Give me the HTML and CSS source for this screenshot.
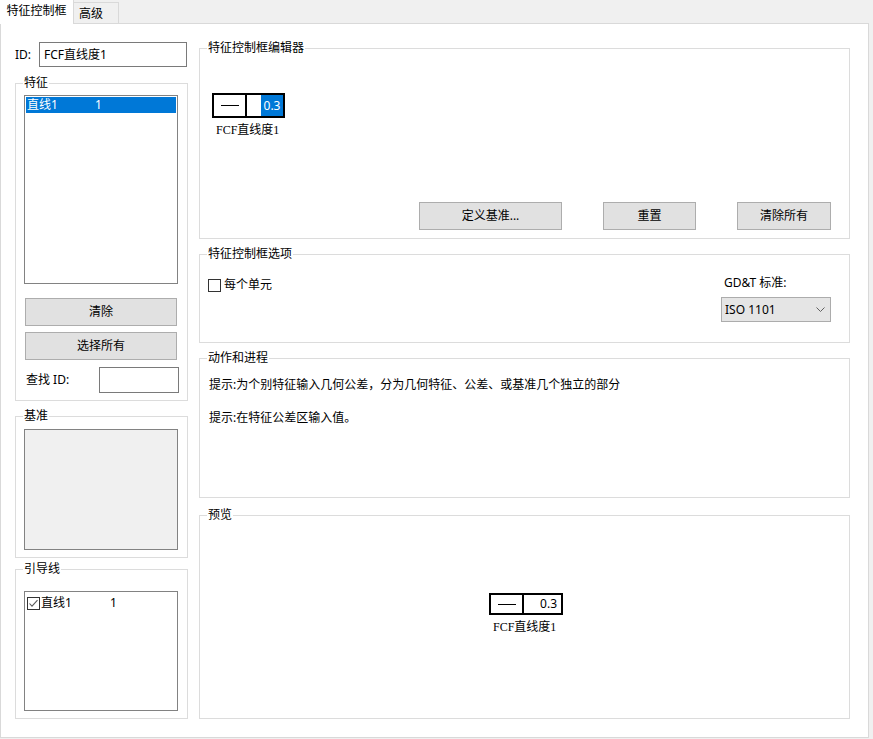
FILE: index.html
```html
<!DOCTYPE html>
<html lang="zh-CN">
<head>
<meta charset="utf-8">
<title>特征控制框</title>
<link rel="stylesheet" href="styles.css">
</head>
<body>
<div class="tabs">
  <div class="tab active">特征控制框</div>
  <div class="tab">高级</div>
</div>
<div class="panel">
  <div class="col-left">
    <div class="id-row">
      <span class="id-lbl">ID:</span>
      <div class="input id-input">FCF直线度1</div>
    </div>
    <div class="group g-feature">
      <div class="gtitle">特征</div>
      <div class="listbox feat-list">
        <div class="row selected"><span class="c1">直线1</span><span>1</span></div>
      </div>
      <div class="btn wide btn-clear">清除</div>
      <div class="btn wide btn-all">选择所有</div>
      <div class="find-row">
        <span>查找 ID:</span>
        <div class="input find-input"></div>
      </div>
    </div>
    <div class="group g-datum">
      <div class="gtitle">基准</div>
      <div class="datum-box"></div>
    </div>
    <div class="group g-leader">
      <div class="gtitle">引导线</div>
      <div class="listbox leader-list">
        <div class="row check-item">
          <svg class="cb" width="13" height="13" viewBox="0 0 13 13"><rect x="0.5" y="0.5" width="12" height="12" fill="#fff" stroke="#333"/><path d="M2.5 6.5 L5 9.2 L10.5 3.2" fill="none" stroke="#5a5a5a" stroke-width="1.1"/></svg>
          <span class="c1 lc1">直线1</span><span class="num">1</span>
        </div>
      </div>
    </div>
  </div>
  <div class="col-right">
    <div class="group g-editor">
      <div class="gtitle">特征控制框编辑器</div>
      <div class="fcf-wrap edit-wrap">
        <div class="fcf fcf-edit">
          <div class="sym"><div class="dash"></div></div>
          <div class="val"><span class="hl">0.3</span></div>
        </div>
        <div class="fcf-label">FCF直线度1</div>
      </div>
      <div class="edit-btns">
        <div class="btn b1">定义基准...</div>
        <div class="btn b2">重置</div>
        <div class="btn b3">清除所有</div>
      </div>
    </div>
    <div class="group g-options">
      <div class="gtitle">特征控制框选项</div>
      <div class="opt-body">
        <div class="check-row">
          <svg class="cb" width="13" height="13" viewBox="0 0 13 13"><rect x="0.5" y="0.5" width="12" height="12" fill="#fff" stroke="#333"/></svg>
          <span>每个单元</span>
        </div>
        <div class="std">
          <div class="std-lbl">GD&amp;T 标准:</div>
          <div class="select"><span>ISO 1101</span>
            <svg width="9" height="6" viewBox="0 0 9 6"><path d="M0.5 0.5 L4.5 4.5 L8.5 0.5" fill="none" stroke="#606060"/></svg>
          </div>
        </div>
      </div>
    </div>
    <div class="group g-actions">
      <div class="gtitle">动作和进程</div>
      <div class="hint h1">提示:为个别特征输入几何公差，分为几何特征、公差、或基准几个独立的部分</div>
      <div class="hint h2">提示:在特征公差区输入值。</div>
    </div>
    <div class="group g-preview">
      <div class="gtitle">预览</div>
      <div class="fcf-wrap prev-wrap">
        <div class="fcf fcf-prev">
          <div class="sym"><div class="dash"></div></div>
          <div class="val"><span>0.3</span></div>
        </div>
        <div class="fcf-label">FCF直线度1</div>
      </div>
    </div>
  </div>
</div>
</body>
</html>
```
FILE: styles.css
```css
* { box-sizing: border-box; }

body {
  margin: 0;
  width: 873px;
  height: 739px;
  overflow: hidden;
  background: #f0f0f0;
  color: #000;
  font-family: "Noto Sans", "Noto Sans CJK SC", sans-serif;
  font-size: 12px;
  line-height: 16px;
}

/* tabs */
.tabs {
  display: flex;
  height: 23px;
  position: relative;
  z-index: 1;
}
.tab {
  width: 45px;
  height: 21px;
  margin-top: 2px;
  padding-left: 5px;
  line-height: 21px;
  background: #f0f0f0;
  border-top: 1px solid #d9d9d9;
  border-right: 1px solid #d9d9d9;
}
.tab.active {
  width: 74px;
  height: 24px;
  margin-top: 0;
  padding-left: 0;
  text-align: center;
  line-height: 22px;
  background: #fff;
  border-top: none;
}

/* panel */
.panel {
  width: 869px;
  height: 715px;
  background: #fff;
  border: 1px solid #d9d9d9;
  display: flex;
  gap: 11px;
  padding-left: 14px;
}
.col-left {
  width: 173px;
  padding-top: 18px;
  display: flex;
  flex-direction: column;
}
.col-right {
  width: 651px;
  padding-top: 24px;
  display: flex;
  flex-direction: column;
}

/* group boxes */
.group {
  border: 1px solid #dcdcdc;
  display: flex;
  flex-direction: column;
  padding: 0 8px;
}
.gtitle {
  align-self: flex-start;
  margin: -9px 0 0 -1px;
  padding: 0 1px;
  background: #fff;
  line-height: 16px;
}

/* inputs, lists, buttons */
.input {
  height: 25px;
  border: 1px solid #7a7a7a;
  background: #fff;
  padding-left: 4px;
  line-height: 23px;
}
.id-row {
  display: flex;
  align-items: center;
  height: 25px;
}
.id-lbl { width: 24px; }
.id-input { width: 148px; }

.listbox {
  border: 1px solid #828282;
  background: #fff;
  padding: 1px;
}
.row {
  display: flex;
  align-items: center;
  height: 16px;
  padding-left: 1px;
}
.row.selected {
  background: #0078d7;
  color: #fff;
}
.c1 { width: 68px; }
.num { color: #000; }

.btn {
  flex: none;
  height: 28px;
  background: #e1e1e1;
  border: 1px solid #adadad;
  display: flex;
  align-items: center;
  justify-content: center;
}
.btn.wide {
  margin-left: 1px;
  margin-right: 1px;
}

/* feature group */
.g-feature {
  margin-top: 16px;
  height: 318px;
  padding-right: 9px;
}
.feat-list {
  flex: none;
  margin-top: 4px;
  height: 189px;
}
.btn-clear { margin-top: 14px; }
.btn-all { margin-top: 6px; }
.find-row {
  flex: none;
  margin-top: 7px;
  display: flex;
  align-items: center;
  justify-content: space-between;
  padding-left: 2px;
}
.find-input {
  width: 80px;
  height: 26px;
  margin-right: -1px;
}

/* datum group */
.g-datum {
  margin-top: 15px;
  height: 142px;
  padding-right: 9px;
}
.datum-box {
  flex: none;
  margin-top: 5px;
  height: 121px;
  background: #f0f0f0;
  border: 1px solid #828282;
}

/* leader group */
.g-leader {
  margin-top: 11px;
  height: 150px;
  padding-right: 9px;
}
.leader-list {
  flex: none;
  margin-top: 14px;
  height: 120px;
}
.check-item {
  margin-top: 2px;
  gap: 1px;
}
.lc1 { width: 68px; }
.cb { flex: none; display: block; }

/* editor group */
.g-editor { height: 191px; }
.fcf-wrap {
  display: flex;
  flex-direction: column;
  align-items: flex-start;
}
.edit-wrap { margin: 37px 0 0 4px; }
.fcf {
  display: flex;
  border: 2px solid #000;
  background: #fff;
}
.fcf-edit { height: 25px; }
.sym {
  width: 33px;
  border-right: 2px solid #000;
  display: flex;
  align-items: center;
  justify-content: center;
}
.dash {
  width: 18px;
  height: 1px;
  background: #000;
}
.val {
  width: 36px;
  display: flex;
  justify-content: flex-end;
  align-items: stretch;
}
.hl {
  width: 22px;
  background: #0078d7;
  color: #fff;
  display: flex;
  align-items: center;
  justify-content: center;
}
.fcf-label {
  margin: 5px 0 0 4px;
  font-family: "Liberation Serif", "Noto Sans CJK SC", serif;
  font-size: 12px;
  line-height: 14px;
}
.edit-btns {
  margin-top: auto;
  margin-bottom: 8px;
  padding-right: 10px;
  display: flex;
  justify-content: flex-end;
  gap: 41px;
}
.b1 { width: 143px; }
.b2 { width: 93px; }
.b3 { width: 94px; }

/* options group */
.g-options {
  margin-top: 15px;
  height: 89px;
}
.opt-body {
  margin-top: 13px;
  padding-right: 10px;
  display: flex;
  justify-content: space-between;
}
.check-row {
  margin-top: 2px;
  display: flex;
  align-items: center;
  gap: 3px;
  height: 16px;
}
.std {
  display: flex;
  flex-direction: column;
}
.std-lbl { margin-left: 3px; }
.select {
  margin-top: 6px;
  width: 110px;
  height: 25px;
  background: #e5e5e5;
  border: 1px solid #acacac;
  display: flex;
  align-items: center;
  justify-content: space-between;
  padding: 0 5px 0 3px;
}

/* actions group */
.g-actions {
  margin-top: 15px;
  height: 140px;
}
.hint { margin-left: 1px; }
.h1 { margin-top: 11px; }
.h2 { margin-top: 17px; }

/* preview group */
.g-preview {
  margin-top: 17px;
  height: 204px;
}
.prev-wrap {
  align-self: center;
  margin: 70px 0 0 3px;
}
.fcf-prev { height: 22px; }
.fcf-prev .val {
  width: 37px;
  padding-right: 4px;
  align-items: center;
}
```
